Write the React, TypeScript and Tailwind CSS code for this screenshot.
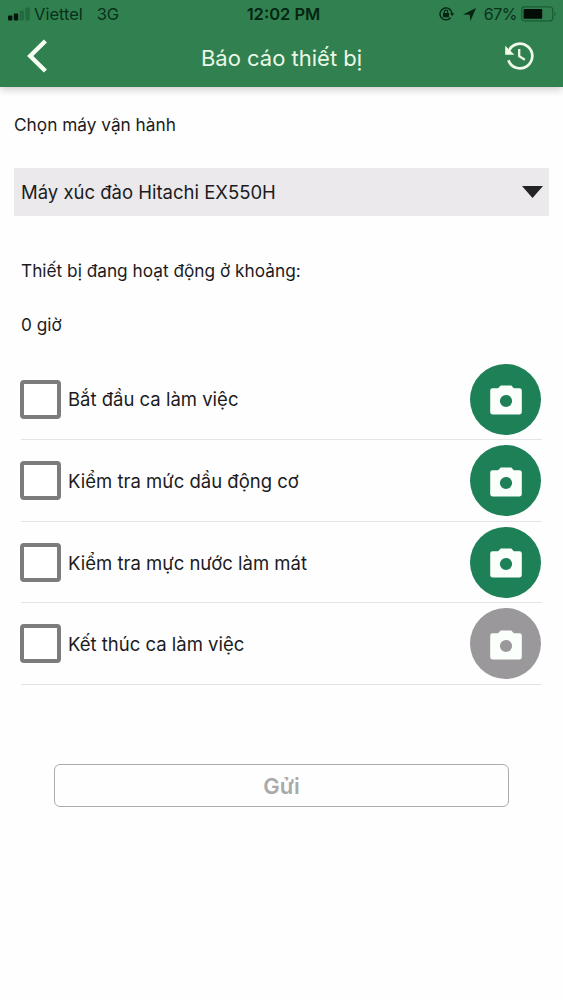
import { useState } from "react";
import clsx from "clsx";

type Task = {
  id: number;
  label: string;
  canCapture: boolean;
};

const tasks: Task[] = [
  { id: 1, label: "Bắt đầu ca làm việc", canCapture: true },
  { id: 2, label: "Kiểm tra mức dầu động cơ", canCapture: true },
  { id: 3, label: "Kiểm tra mực nước làm mát", canCapture: true },
  { id: 4, label: "Kết thúc ca làm việc", canCapture: false },
];

function StatusBar() {
  return (
    <div className="grid h-7 grid-cols-3 items-center pl-2 pr-1.5 text-[16.5px] leading-7 text-[#08301a]">
      <div className="flex items-center">
        <svg width="23" height="14" viewBox="0 0 23 14" className="shrink-0">
          <rect x="0" y="8.4" width="4.4" height="5" rx="1" fill="#04150b" />
          <rect x="5.8" y="6.4" width="4.4" height="7" rx="1" fill="#04150b" />
          <rect x="11.6" y="3.4" width="4.4" height="10" rx="1" fill="#246a40" />
          <rect x="17.4" y="0.4" width="4.4" height="13" rx="1" fill="#246a40" />
        </svg>
        <span className="ml-[3px]">Viettel</span>
        <span className="ml-3.5 tracking-[-0.3px]">3G</span>
      </div>
      <div className="whitespace-nowrap pl-0.5 text-center font-semibold text-[#052512]">12:02 PM</div>
      <div className="flex items-center justify-end">
        <svg width="16" height="14" viewBox="0 0 16 14" fill="none" stroke="#052512" strokeWidth="1.4">
          <path d="M11.6 10.8A6 6 0 1 1 13 6.4" />
          <path d="M10.8 6.2h4.6L13.1 9z" fill="#052512" stroke="none" />
          <rect x="4" y="6" width="6" height="4.3" fill="#052512" stroke="none" />
          <path d="M5.3 6V4.8a1.7 1.7 0 0 1 3.4 0V6" strokeWidth="1.1" />
        </svg>
        <svg width="13" height="13" viewBox="0 0 13 13" className="ml-2" fill="#052512">
          <path d="M13 0 7.4 13 6.6 6.8 0 6.4z" />
        </svg>
        <span className="ml-2 text-[16px] tracking-[-0.5px]">67%</span>
        <svg width="36" height="16" viewBox="0 0 36 16" className="ml-1 shrink-0">
          <rect x="0.7" y="0.9" width="31" height="14" rx="3" fill="none" stroke="#1b5c34" strokeWidth="1.2" />
          <rect x="2.6" y="3" width="18.6" height="9.8" rx="0.8" fill="#020d06" />
          <path d="M33.4 5.7c1.6.8 1.6 3.6 0 4.4z" fill="#1b5c34" />
        </svg>
      </div>
    </div>
  );
}

function HistoryIcon() {
  return (
    <svg width="32" height="30" viewBox="0 0 32 30" fill="none" stroke="#f0fbe9" strokeWidth="2.7">
      <path d="M5.6 11.4A12.3 12.3 0 1 1 5.4 20.2" />
      <path d="M2.2 5.8v9h9.2z" fill="#f0fbe9" stroke="none" />
      <path d="M16.2 9v7.2l5.6 3.5" strokeWidth="2.3" />
    </svg>
  );
}

function CameraIcon() {
  return (
    <svg width="32" height="30" viewBox="0 0 32 30" fill="currentColor">
      <path
        fillRule="evenodd"
        d="M10.7 0.4h10.6l2.6 2.9H29.5A2.3 2.3 0 0 1 31.8 5.6v21.2A2.6 2.6 0 0 1 29.2 29.4H2.8A2.6 2.6 0 0 1 .2 26.8V5.6A2.3 2.3 0 0 1 2.5 3.3H8.1zM16 9.9a6.1 6.1 0 1 0 0 12.2 6.1 6.1 0 0 0 0-12.2z"
      />
    </svg>
  );
}

function TaskRow({ task, checked, onToggle }: { task: Task; checked: boolean; onToggle: () => void }) {
  return (
    <li className="flex h-[81.6px] items-center border-b border-[#e4e4e6] pt-px">
      <button
        role="checkbox"
        aria-checked={checked}
        aria-label={task.label}
        onClick={onToggle}
        className={clsx(
          "-ml-px h-[39px] w-[41px] shrink-0 rounded-[4px] border-4 border-[#7c7c7c]",
          checked ? "bg-[#1d8056]" : "bg-white",
        )}
      />
      <span className="ml-[7px] flex-1 whitespace-nowrap pt-0.5 text-[18.5px]">{task.label}</span>
      <button
        disabled={!task.canCapture}
        aria-label="Camera"
        className={clsx(
          "mr-px flex h-[71px] w-[71px] items-center justify-center rounded-full pt-0.5 text-[#fbfffb]",
          task.canCapture ? "bg-[#1d8056]" : "bg-[#9a989b]",
        )}
      >
        <CameraIcon />
      </button>
    </li>
  );
}

export default function App() {
  const [checked, setChecked] = useState<number[]>([]);

  const toggle = (id: number) =>
    setChecked((prev) => (prev.includes(id) ? prev.filter((x) => x !== id) : [...prev, id]));

  return (
    <div className="min-h-screen bg-[#fefefe] font-['Inter',sans-serif] text-[#1b1b1d]">
      <header className="h-[87px] bg-[#318150] shadow-[0_2px_8px_rgba(0,0,0,0.22)]">
        <StatusBar />
        <div className="flex h-[59px] items-center justify-between pl-[26px] pr-7">
          <button aria-label="Back" className="-mt-1">
            <svg width="24" height="34" viewBox="0 0 24 34" fill="none" stroke="#f6fff2" strokeWidth="4.4">
              <path d="M19.4 2 4.2 17 19.4 32" />
            </svg>
          </button>
          <h1 className="whitespace-nowrap pl-2.5 pt-px text-[22px] text-[#e9f8e6]">Báo cáo thiết bị</h1>
          <button aria-label="History" className="-mt-1.5">
            <HistoryIcon />
          </button>
        </div>
      </header>

      <main className="px-3.5">
        <p className="pt-6 text-[17.25px] leading-7">Chọn máy vận hành</p>

        <button className="mt-[29px] flex h-12 w-full items-center justify-between bg-[#ebe9eb] pl-[7px] pr-1.5">
          <span className="pt-0.5 text-[18.5px]">Máy xúc đào Hitachi EX550H</span>
          <svg width="21" height="12" viewBox="0 0 21 12" fill="#232225">
            <path d="M0 0h21L10.5 12z" />
          </svg>
        </button>

        <div className="px-[7px]">
          <p className="mt-[41px] text-[17.25px] leading-7">Thiết bị đang hoạt động ở khoảng:</p>
          <p className="mt-[26px] text-[17.25px] leading-7">0 giờ</p>

          <ul className="mt-[19.4px]">
            {tasks.map((task) => (
              <TaskRow
                key={task.id}
                task={task}
                checked={checked.includes(task.id)}
                onToggle={() => toggle(task.id)}
              />
            ))}
          </ul>
        </div>

        <button
          disabled
          className="mx-10 mt-[79px] flex h-[43px] w-[455px] items-center justify-center rounded-md border-[1.5px] border-[#ababab] pt-0.5 text-[22px] font-semibold text-[#a9a9a9]"
        >
          Gửi
        </button>
      </main>
    </div>
  );
}
